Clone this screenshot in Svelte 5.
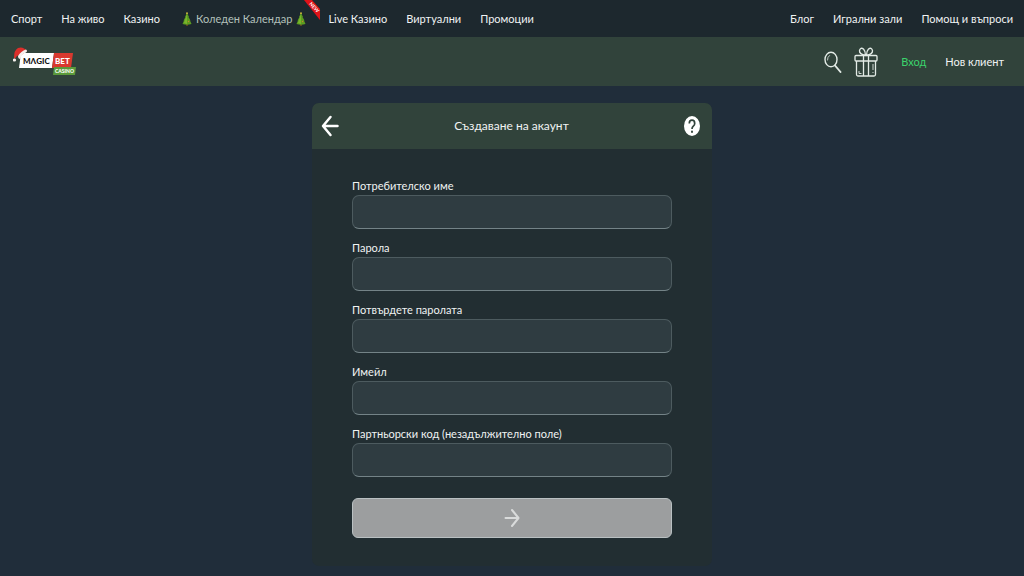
<script>
	const mainLinks = [
		{ text: 'Спорт', href: '#sport' },
		{ text: 'На живо', href: '#live' },
		{ text: 'Казино', href: '#casino' },
		{ text: 'Коледен Календар', href: '#calendar', promo: true },
		{ text: 'Live Казино', href: '#live-casino' },
		{ text: 'Виртуални', href: '#virtual' },
		{ text: 'Промоции', href: '#promo' }
	]
	const sideLinks = [
		{ text: 'Блог', href: '#blog' },
		{ text: 'Игрални зали', href: '#halls' },
		{ text: 'Помощ и въпроси', href: '#help' }
	]
	const fields = [
		{ id: 'username', label: 'Потребителско име', type: 'text' },
		{ id: 'password', label: 'Парола', type: 'password' },
		{ id: 'confirm', label: 'Потвърдете паролата', type: 'password' },
		{ id: 'email', label: 'Имейл', type: 'email' },
		{ id: 'partner', label: 'Партньорски код (незадължително поле)', type: 'text' }
	]
	let values = $state({ username: '', password: '', confirm: '', email: '', partner: '' })
	let ready = $derived(
		!!values.username && !!values.password && values.password === values.confirm && !!values.email
	)
</script>

{#snippet tree()}
	<svg class="tree" viewBox="0 0 10 14" aria-hidden="true">
		<path d="M4 11h2v3H4z" fill="#5d4420" />
		<path d="M5 1 7 5 6.500 5 8.500 8.500 8 8.500 9.500 12Q5 13.500 .5 12L2 8.500 1.500 8.500 3.500 5 3 5z" fill="#5c9c20" />
		<path d="M5 2v10l-3-1z" fill="#79b52c" />
		<circle cx="5" cy="1.200" r="1" fill="#c7b43c" />
		<circle cx="6.500" cy="9.500" r=".7" fill="#c9862a" />
	</svg>
{/snippet}

<div class="page">
	<nav class="topbar">
		<div class="links">
			{#each mainLinks as l}
				{#if l.promo}
					<a class="promo" href={l.href}>
						{@render tree()}
						<span>{l.text}</span>
						{@render tree()}
						<svg class="ribbon" viewBox="0 0 18 20" aria-hidden="true">
							<path d="M1 0H9L17 9V20z" fill="#e01218" />
							<text x="0" y="0" transform="translate(6 4) rotate(49)" font-size="5" font-weight="700" fill="#fff">NEW</text>
						</svg>
					</a>
				{:else}
					<a href={l.href}>{l.text}</a>
				{/if}
			{/each}
		</div>
		<div class="links">
			{#each sideLinks as l}
				<a href={l.href}>{l.text}</a>
			{/each}
		</div>
	</nav>

	<header>
		<a class="logo" href="#home" aria-label="Magic Bet Casino">
			<svg viewBox="0 0 64 30">
				<path d="M8 6H41L39 21H6z" fill="#fff" />
				<path d="M41 6H60L58 21H39z" fill="#d9392f" />
				<path d="M41 20H63L62 28H40z" fill="#5b9a3b" />
				<text x="10" y="17" font-size="8" font-weight="900" fill="#111">MΛGIC</text>
				<text x="42" y="17" font-size="8" font-weight="900" fill="#fff">BET</text>
				<text x="42" y="26" font-size="5" font-weight="900" fill="#fff">CASINO</text>
				<path d="M1 11Q1 3 5 1 10-1 14 4L7 9Q4 7 2 12z" fill="#dc2f2b" />
				<path d="M5 9Q8 4 13 2.500 15 4 13 5.500 8 7 7.500 12 5 12 5 9z" fill="#f5f1ee" />
				<circle cx="1.500" cy="13" r="1.600" fill="#f5f1ee" />
			</svg>
		</a>
		<div class="actions">
			<button class="icon search" aria-label="Търсене">
				<svg viewBox="0 0 18 22" fill="none" stroke="#e3ebe6" stroke-linecap="round">
					<ellipse cx="7" cy="8.500" rx="6" ry="7.300" stroke-width="1.400" />
					<path d="M3.500 9Q3.300 6 5.500 4.500" stroke-width=".8" />
					<path d="M11 14.500 16.500 21" stroke-width="1.900" />
				</svg>
			</button>
			<button class="icon gift" aria-label="Подаръци">
				<svg viewBox="0 0 24 30" fill="none" stroke="#e3ebe6" stroke-width="1.300" stroke-linejoin="round">
					<rect x="1" y="8.500" width="22" height="5.500" rx="1" />
					<path d="M2.500 14V27.500Q2.500 29 4 29H20Q21.500 29 21.500 27.500V14M9.500 8.500V29M14.500 8.500V29" />
					<path d="M11.500 8.500Q5 7 5.500 3.500 6.500 0 9.500 2 11.500 4 11.500 8.500M12.500 8.500Q19 7 18.500 3.500 17.500 0 14.500 2 12.500 4 12.500 8.500" />
					<path d="M5 24V26.500H7.500M19 17V23M19 25V26" stroke-width=".9" />
				</svg>
			</button>
			<a class="login" href="#login">Вход</a>
			<a href="#register">Нов клиент</a>
		</div>
	</header>

	<main>
		<section class="card">
			<div class="card-head">
				<button class="icon back" aria-label="Назад">
					<svg viewBox="0 0 18 22" fill="none" stroke="#fff" stroke-width="2.500" stroke-linecap="round" stroke-linejoin="round">
						<path d="M9.500 2 2 11 9.500 20M2.500 11H16.500" />
					</svg>
				</button>
				<h1>Създаване на акаунт</h1>
				<button class="icon help" aria-label="Помощ">
					<svg viewBox="0 0 16 20">
						<ellipse cx="8" cy="10" rx="8" ry="10" fill="#fff" />
						<path d="M5.300 7.500Q5.300 4.200 8 4.200T10.700 7.400Q10.700 9 9.300 10.200 8 11.300 8 13" fill="none" stroke="#31433b" stroke-width="1.700" />
						<ellipse cx="8" cy="15.700" rx="1" ry="1.300" fill="#31433b" />
					</svg>
				</button>
			</div>
			<form onsubmit={e => e.preventDefault()}>
				{#each fields as f}
					<div class="field">
						<label for={f.id}>{f.label}</label>
						<input id={f.id} type={f.type} bind:value={values[f.id]} />
					</div>
				{/each}
				<button class="submit" class:ready type="submit" aria-label="Напред">
					<svg viewBox="0 0 16 20" fill="none" stroke="#d9dbdb" stroke-width="2" stroke-linecap="round" stroke-linejoin="round">
						<path d="M8 2 14.500 10 8 18M1.500 10H14" />
					</svg>
				</button>
			</form>
		</section>
	</main>
</div>

<style>
	:global(body) {
		margin: 0;
		background: #202d3a;
	}
	.page {
		min-height: 100vh;
		font-family: Lato, 'Noto Sans', sans-serif;
		font-size: 11px;
		line-height: 16px;
		color: #f0f3f3;
	}
	a {
		color: inherit;
		text-decoration: none;
		white-space: nowrap;
	}
	a:hover {
		color: #fff;
	}
	svg {
		display: block;
	}
	.topbar {
		display: flex;
		justify-content: space-between;
		align-items: center;
		height: 37px;
		padding: 0 11px;
		background: #1d282e;
	}
	.links {
		display: flex;
		align-items: center;
		gap: 19px;
	}
	.promo {
		position: relative;
		display: flex;
		align-items: center;
		gap: 4px;
		padding: 0 3px;
		color: #b3c0bb;
	}
	.tree {
		width: 10px;
		height: 14px;
	}
	.ribbon {
		position: absolute;
		top: -11px;
		right: -12px;
		width: 18px;
		height: 20px;
	}
	header {
		display: flex;
		justify-content: space-between;
		align-items: center;
		height: 49px;
		padding: 0 20px 0 13px;
		background: #31433b;
	}
	.logo svg {
		width: 64px;
		height: 30px;
	}
	.actions {
		display: flex;
		align-items: center;
		gap: 19px;
	}
	.icon {
		padding: 0;
		border: none;
		background: none;
		cursor: pointer;
	}
	.search {
		margin-right: -7px;
	}
	.search svg {
		width: 18px;
		height: 22px;
	}
	.gift svg {
		width: 24px;
		height: 30px;
	}
	.login {
		margin-left: 4px;
		color: #3bd46c;
	}
	main {
		display: flex;
		justify-content: center;
		padding: 17px 16px 10px;
	}
	.card {
		width: 100%;
		max-width: 400px;
		border-radius: 7px;
		overflow: hidden;
		background: #222e32;
	}
	.card-head {
		display: flex;
		justify-content: space-between;
		align-items: center;
		height: 46px;
		padding: 0 12px 0 9px;
		background: #31433b;
	}
	.back svg {
		width: 18px;
		height: 22px;
	}
	.help svg {
		width: 16px;
		height: 20px;
	}
	h1 {
		margin: 0;
		font-size: 12px;
		font-weight: 400;
	}
	form {
		display: flex;
		flex-direction: column;
		gap: 12px;
		padding: 30px 40px 28px;
	}
	.field {
		display: flex;
		flex-direction: column;
		gap: 2px;
	}
	label {
		line-height: 14px;
	}
	input {
		box-sizing: border-box;
		width: 100%;
		height: 34px;
		padding: 0 10px;
		border: 1px solid #4d5b5f;
		border-bottom-color: #748387;
		border-radius: 7px;
		background: #2f3c41;
		color: #fff;
		font: inherit;
	}
	.submit {
		display: flex;
		justify-content: center;
		align-items: center;
		height: 40px;
		margin-top: 9px;
		border: 1px solid #b9c0c2;
		border-radius: 6px;
		background: #9c9e9f;
		cursor: pointer;
	}
	.submit.ready {
		background: #2fae58;
	}
	.submit svg {
		width: 16px;
		height: 20px;
	}
</style>
